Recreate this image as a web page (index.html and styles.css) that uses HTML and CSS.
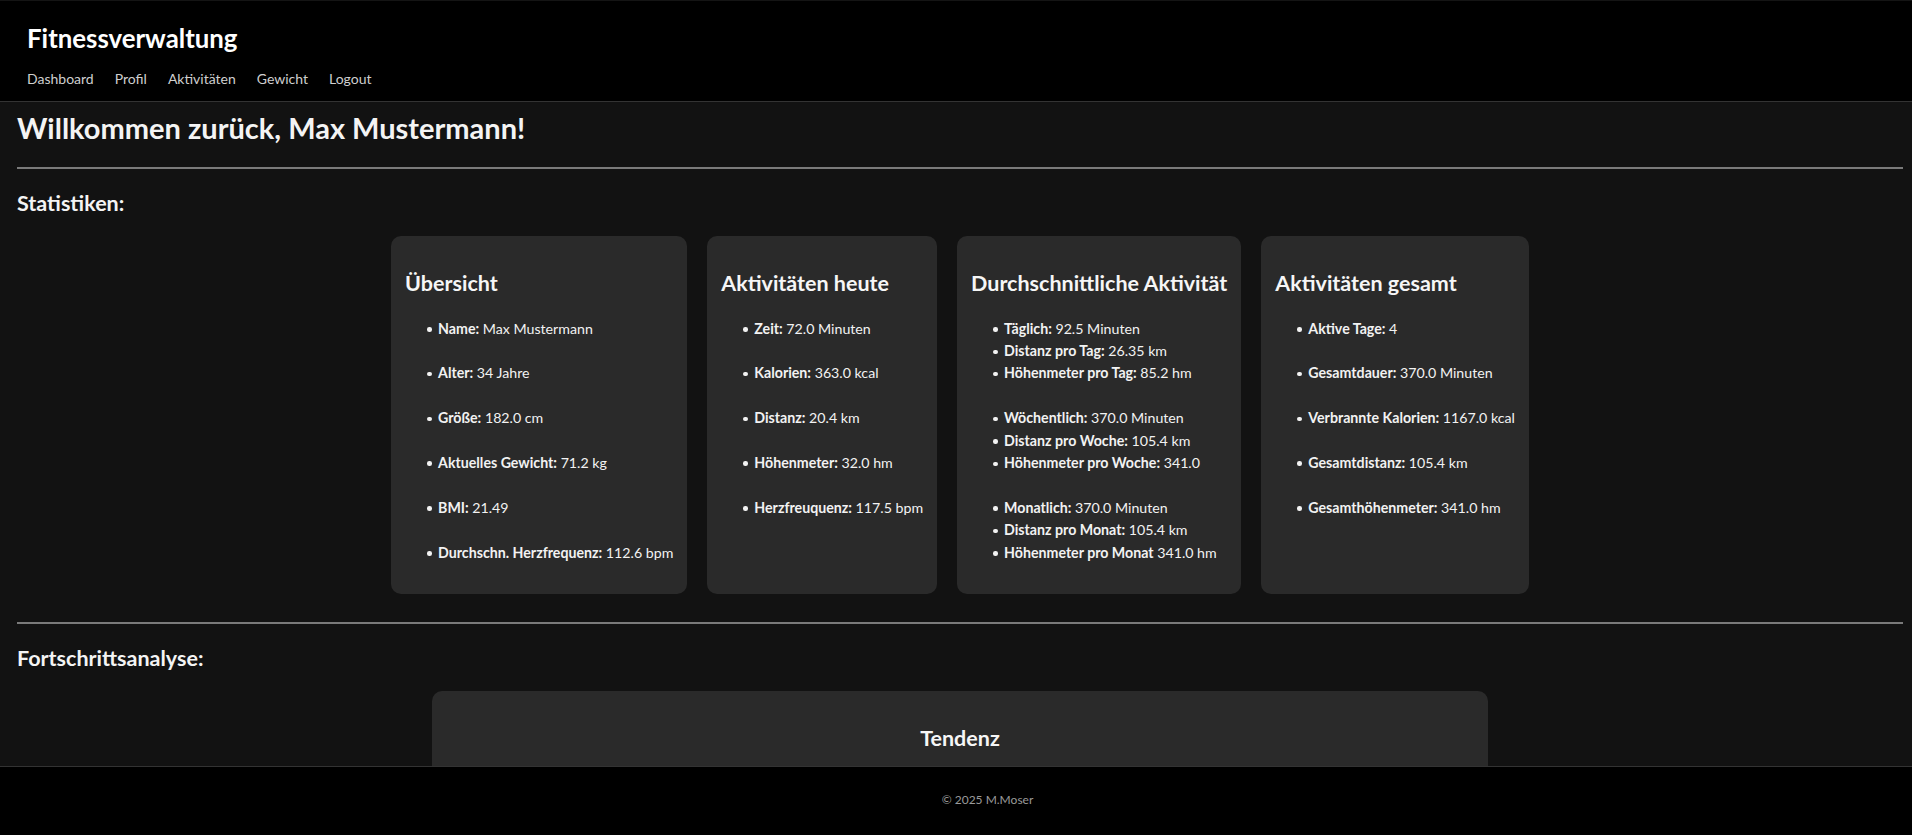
FILE: index.html
```html
<!DOCTYPE html>
<html lang="de">
<head>
<meta charset="utf-8">
<title>Fitnessverwaltung</title>
<link rel="stylesheet" href="styles.css">
</head>
<body>
<header class="site-header">
  <h1 class="brand">Fitnessverwaltung</h1>
  <nav class="nav">
    <a href="#">Dashboard</a>
    <a href="#">Profil</a>
    <a href="#">Aktivitäten</a>
    <a href="#">Gewicht</a>
    <a href="#">Logout</a>
  </nav>
</header>

<main class="main">
  <h1 class="welcome">Willkommen zurück, Max Mustermann!</h1>
  <hr class="rule rule-first">
  <h2 class="section-title">Statistiken:</h2>

  <div class="stats">
    <section class="card">
      <h3 class="card-title">Übersicht</h3>
      <ul class="list spaced">
        <li><strong>Name:</strong> Max Mustermann</li>
        <li><strong>Alter:</strong> 34 Jahre</li>
        <li><strong>Größe:</strong> 182.0 cm</li>
        <li><strong>Aktuelles Gewicht:</strong> 71.2 kg</li>
        <li><strong>BMI:</strong> 21.49</li>
        <li><strong>Durchschn. Herzfrequenz:</strong> 112.6 bpm</li>
      </ul>
    </section>

    <section class="card">
      <h3 class="card-title">Aktivitäten heute</h3>
      <ul class="list spaced">
        <li><strong>Zeit:</strong> 72.0 Minuten</li>
        <li><strong>Kalorien:</strong> 363.0 kcal</li>
        <li><strong>Distanz:</strong> 20.4 km</li>
        <li><strong>Höhenmeter:</strong> 32.0 hm</li>
        <li><strong>Herzfreuquenz:</strong> 117.5 bpm</li>
      </ul>
    </section>

    <section class="card">
      <h3 class="card-title">Durchschnittliche Aktivität</h3>
      <ul class="list">
        <li><strong>Täglich:</strong> 92.5 Minuten</li>
        <li><strong>Distanz pro Tag:</strong> 26.35 km</li>
        <li><strong>Höhenmeter pro Tag:</strong> 85.2 hm</li>
      </ul>
      <ul class="list">
        <li><strong>Wöchentlich:</strong> 370.0 Minuten</li>
        <li><strong>Distanz pro Woche:</strong> 105.4 km</li>
        <li><strong>Höhenmeter pro Woche:</strong> 341.0</li>
      </ul>
      <ul class="list">
        <li><strong>Monatlich:</strong> 370.0 Minuten</li>
        <li><strong>Distanz pro Monat:</strong> 105.4 km</li>
        <li><strong>Höhenmeter pro Monat</strong> 341.0 hm</li>
      </ul>
    </section>

    <section class="card">
      <h3 class="card-title">Aktivitäten gesamt</h3>
      <ul class="list spaced">
        <li><strong>Aktive Tage:</strong> 4</li>
        <li><strong>Gesamtdauer:</strong> 370.0 Minuten</li>
        <li><strong>Verbrannte Kalorien:</strong> 1167.0 kcal</li>
        <li><strong>Gesamtdistanz:</strong> 105.4 km</li>
        <li><strong>Gesamthöhenmeter:</strong> 341.0 hm</li>
      </ul>
    </section>
  </div>

  <hr class="rule rule-second">
  <h2 class="section-title">Fortschrittsanalyse:</h2>

  <section class="card trend">
    <h3 class="card-title trend-title">Tendenz</h3>
    <div class="trend-body"></div>
  </section>
</main>

<footer class="site-footer">
  <p class="copy">© 2025 M.Moser</p>
</footer>
</body>
</html>
```
FILE: styles.css
```css
* { box-sizing: border-box; }

html, body {
  margin: 0;
  padding: 0;
}

body {
  background: #121212;
  color: #f2f2f2;
  font-family: Lato, "Noto Sans", sans-serif;
  font-size: 14px;
  line-height: 1.6;
}

.site-header {
  background: #000;
  border-top: 1px solid #141414;
  border-bottom: 1px solid #333;
  padding: 21px 27px 11px;
}

.brand {
  margin: 0 0 13px;
  font-size: 25.8px;
  line-height: 33px;
  font-weight: 700;
  color: #fff;
}

.nav {
  display: flex;
  gap: 21px;
  line-height: 22px;
}

.nav a {
  color: #cfcfcf;
  text-decoration: none;
  font-size: 14px;
}

.main {
  padding: 6px 9px 0 17px;
}

.welcome {
  margin: 0;
  font-size: 29px;
  line-height: 40px;
  font-weight: 700;
  color: #f4f4f4;
}

.rule {
  border: 0;
  height: 2px;
  background: #7a7a7a;
  margin: 0;
}

.rule-first { margin-top: 19px; }
.rule-second { margin-top: 28px; }

.section-title {
  margin: 19px 0 18px;
  font-size: 21.5px;
  line-height: 30px;
  font-weight: 700;
  color: #f4f4f4;
}

.stats {
  display: flex;
  justify-content: center;
  gap: 20px;
}

.card {
  background: #2a2a2a;
  border-radius: 10px;
  padding: 31px 14px 30px;
}

.card-title {
  margin: 0 0 17px;
  font-size: 21.5px;
  line-height: 33.6px;
  font-weight: 700;
  color: #f6f6f6;
  white-space: nowrap;
}

.list {
  margin: 0;
  padding-left: 33px;
  list-style: none;
  font-size: 14.2px;
  line-height: 22.4px;
}

.list li {
  position: relative;
  white-space: nowrap;
}

.list li::before {
  content: "";
  position: absolute;
  left: -11px;
  top: 9.5px;
  width: 4.5px;
  height: 4.5px;
  border-radius: 50%;
  background: #f2f2f2;
}

.list strong {
  font-weight: 700;
}

.spaced li + li {
  margin-top: 22.4px;
}

.list + .list {
  margin-top: 22.4px;
}

.trend {
  width: 56%;
  margin: 0 auto;
  padding-bottom: 40px;
}

.trend-title {
  text-align: center;
}

.trend-body {
  height: 320px;
}

.site-footer {
  position: fixed;
  left: 0;
  right: 0;
  bottom: 0;
  height: 69px;
  background: #000;
  border-top: 1px solid #333;
  padding: 23px 0 0 63px;
  text-align: center;
}

.copy {
  margin: 0;
  font-size: 12px;
  line-height: 19.2px;
  color: #9a9a9a;
}
```
